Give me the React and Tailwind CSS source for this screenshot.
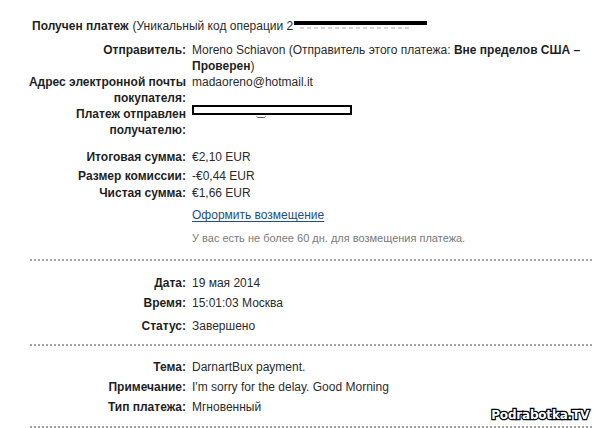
import React from 'react';

const Dots = ({ className = '' }) => (
  <div
    className={`ml-[30px] h-[2px] bg-[repeating-linear-gradient(to_right,#a3a3a3_0_2px,transparent_2px_4px)] ${className}`}
  />
);

const Row = ({ label, children, className = '' }) => (
  <div className={`grid grid-cols-[186px_396px] gap-x-[6px] leading-[16px] ${className}`}>
    <div className="text-right font-bold text-[#1f1f1f]">{label}</div>
    <div className="text-[#2b2b2b]">{children}</div>
  </div>
);

export default function App() {
  return (
    <div className="relative w-[594px] h-[428px] overflow-hidden bg-white font-['Liberation_Sans',Arial,sans-serif] text-[12px]">
      {/* Header */}
      <div className="flex items-start pl-[32px] pt-[18px] leading-[16px] text-[#2b2b2b]">
        <span className="font-bold text-[#1f1f1f]">Получен платеж</span>
        <span className="ml-[4px]">(Уникальный код операции 2</span>
        <span className="relative mt-[3px] ml-[1px] w-[133px] h-[4px] bg-black">
          <span className="absolute left-[6px] top-[6px] w-[110px] h-[2px] bg-[repeating-linear-gradient(to_right,#d6d6d6_0_4px,transparent_4px_7px)]" />
        </span>
      </div>

      <Row label="Отправитель:" className="mt-[8px]">
        Moreno Schiavon (Отправитель этого платежа: <b className="text-[#1f1f1f]">Вне пределов США –</b>
        <br />
        <b className="text-[#1f1f1f]">Проверен</b>)
      </Row>
      <Row label={<>Адрес электронной почты<br />покупателя:</>}>madaoreno@hotmail.it</Row>
      <Row label={<>Платеж отправлен<br />получателю:</>}>
        <span className="relative block mt-[-1px] w-[160px] h-[10px] border-2 border-black bg-white">
          <span className="absolute left-[62px] top-[8px] w-[10px] h-[3px] rounded-b-full border-b border-[#555]" />
        </span>
      </Row>

      <Row label="Итоговая сумма:" className="mt-[11px]">€2,10 EUR</Row>
      <Row label="Размер комиссии:" className="mt-[3px]">-€0,44 EUR</Row>
      <Row label="Чистая сумма:" className="mt-[1px]">€1,66 EUR</Row>
      <Row label="" className="mt-[6px]">
        <span className="text-[#1d4e89] underline underline-offset-2">Оформить возмещение</span>
      </Row>
      <Row label="" className="mt-[7px]">
        <span className="text-[11px] text-[#7a7a7a]">У вас есть не более 60 дн. для возмещения платежа.</span>
      </Row>

      <Dots className="mt-[13px]" />

      <Row label="Дата:" className="mt-[14px]">19 мая 2014</Row>
      <Row label="Время:" className="mt-[4px]">15:01:03 Москва</Row>
      <Row label="Статус:" className="mt-[7px]">Завершено</Row>

      <Dots className="mt-[10px]" />

      <Row label="Тема:" className="mt-[13px]">DarnartBux payment.</Row>
      <Row label="Примечание:" className="mt-[4px]">I'm sorry for the delay. Good Morning</Row>
      <Row label="Тип платежа:" className="mt-[4px]">Мгновенный</Row>

      <Dots className="mt-[11px]" />

      {/* Watermark */}
      <div className="absolute right-[5px] top-[408px] font-['DejaVu_Sans',sans-serif] font-bold text-[12px] leading-[14px] text-white tracking-[-0.2px] [-webkit-text-stroke:2.5px_black] [paint-order:stroke_fill]">
        Podrabotka.TV
      </div>
    </div>
  );
}
